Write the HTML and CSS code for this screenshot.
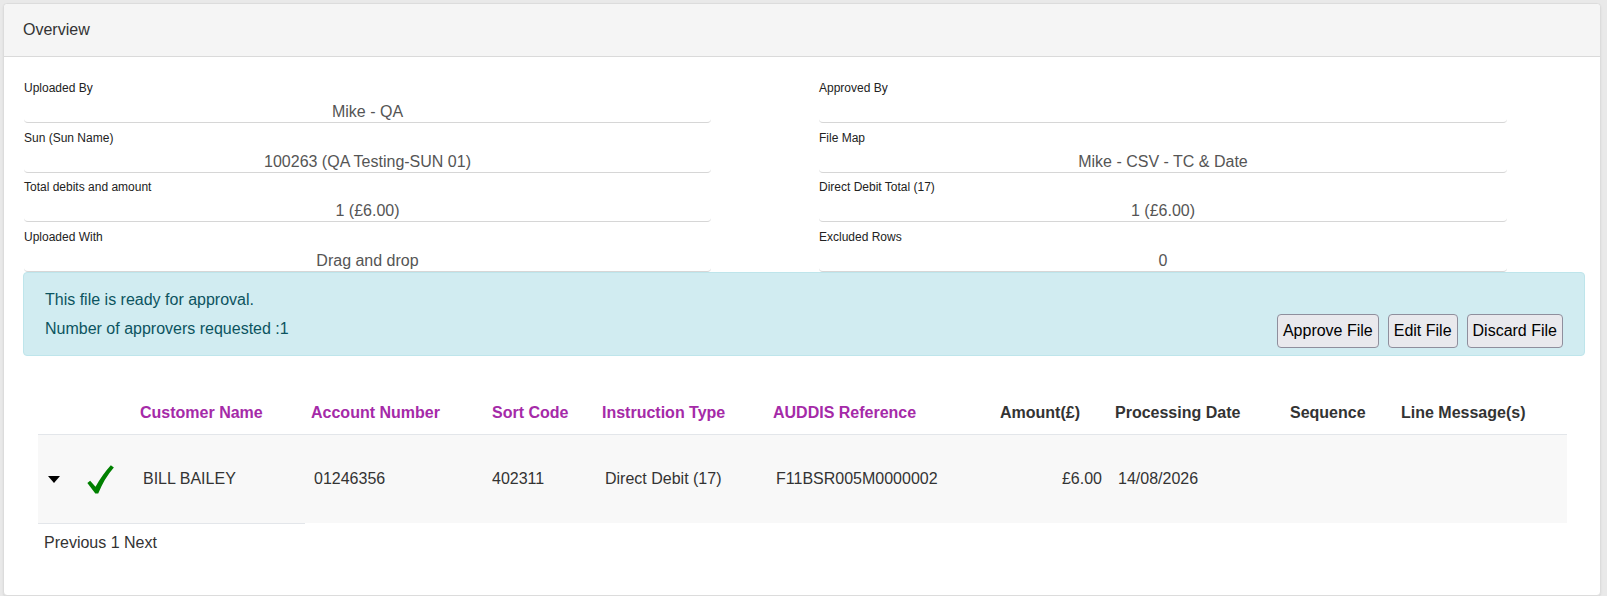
FILE: index.html
```html
<!DOCTYPE html>
<html lang="en">
<head>
    <meta charset="UTF-8">
    <meta name="viewport" content="width=device-width, initial-scale=1.0">
    <title>Submission Overview</title>
    <link rel="stylesheet" href="styles.css">
</head>
<body>
    <div class="panel">
        <div class="panel-heading">Overview</div>
        <div class="panel-body">
            <div class="summary">
                <div class="field">
                    <label>Uploaded By</label>
                    <div class="field-value">Mike - QA</div>
                </div>
                <div class="field">
                    <label>Approved By</label>
                    <div class="field-value"></div>
                </div>
                <div class="field">
                    <label>Sun (Sun Name)</label>
                    <div class="field-value">100263 (QA Testing-SUN 01)</div>
                </div>
                <div class="field">
                    <label>File Map</label>
                    <div class="field-value">Mike - CSV - TC &amp; Date</div>
                </div>
                <div class="field">
                    <label>Total debits and amount</label>
                    <div class="field-value">1 (£6.00)</div>
                </div>
                <div class="field">
                    <label>Direct Debit Total (17)</label>
                    <div class="field-value">1 (£6.00)</div>
                </div>
                <div class="field">
                    <label>Uploaded With</label>
                    <div class="field-value">Drag and drop</div>
                </div>
                <div class="field">
                    <label>Excluded Rows</label>
                    <div class="field-value">0</div>
                </div>
            </div>

            <div class="alert">
                <div class="alert-text">
                    <p>This file is ready for approval.</p>
                    <p>Number of approvers requested :1</p>
                </div>
                <div class="alert-actions">
                    <button>Approve File</button>
                    <button>Edit File</button>
                    <button>Discard File</button>
                </div>
            </div>

            <table class="rows">
                <colgroup>
                    <col style="width:40px">
                    <col style="width:57px">
                    <col style="width:171px">
                    <col style="width:181px">
                    <col style="width:110px">
                    <col style="width:171px">
                    <col style="width:227px">
                    <col style="width:115px">
                    <col style="width:175px">
                    <col style="width:111px">
                    <col style="width:171px">
                </colgroup>
                <thead>
                    <tr>
                        <th></th>
                        <th></th>
                        <th class="sortable">Customer Name</th>
                        <th class="sortable">Account Number</th>
                        <th class="sortable">Sort Code</th>
                        <th class="sortable">Instruction Type</th>
                        <th class="sortable">AUDDIS Reference</th>
                        <th>Amount(£)</th>
                        <th>Processing Date</th>
                        <th>Sequence</th>
                        <th>Line Message(s)</th>
                    </tr>
                </thead>
                <tbody>
                    <tr>
                        <td class="expand"><span class="caret"></span></td>
                        <td class="status">
                            <svg width="27" height="29" viewBox="0 0 26 28">
                                <path d="M0.3 17.3 L3 15.2 L8.2 21 Q15 9 23 0.3 L25.9 2.3 Q16.5 13 10.8 27.6 L8 27.6 Z" fill="#008000"/>
                            </svg>
                        </td>
                        <td>BILL BAILEY</td>
                        <td>01246356</td>
                        <td class="tight">402311</td>
                        <td>Direct Debit (17)</td>
                        <td>F11BSR005M0000002</td>
                        <td class="num">£6.00</td>
                        <td>14/08/2026</td>
                        <td></td>
                        <td></td>
                    </tr>
                </tbody>
            </table>
            <div class="pager">Previous 1 Next</div>
        </div>
    </div>
</body>
</html>
```

FILE: styles.css
```css
* {
    box-sizing: border-box;
}

body {
    margin: 0;
    background-color: #e9e9e9;
    font-family: "Liberation Sans", Arial, sans-serif;
    font-size: 16px;
    color: #333;
}

.panel {
    width: 1598px;
    margin: 3px 6px 5px 3px;
    background: white;
    border: 1px solid #dcdcdc;
    border-radius: 4px;
    box-shadow: 0 1px 2px rgba(0, 0, 0, 0.08);
}

.panel-heading {
    height: 53px;
    line-height: 52px;
    padding: 0 19px;
    background-color: #f5f5f5;
    border-bottom: 1px solid #dadada;
    border-radius: 4px 4px 0 0;
}

.panel-body {
    padding: 24px 15px 42px 19px;
}

.summary {
    display: grid;
    grid-template-columns: 687px 688px;
    column-gap: 108px;
    padding-left: 1px;
}

.field {
    margin-bottom: 7.5px;
}

.field:nth-last-child(-n+2) {
    margin-bottom: 0;
}

.field label {
    display: block;
    font-size: 12px;
    line-height: 14px;
    color: #222;
}

.field-value {
    height: 28px;
    padding-top: 7px;
    line-height: 20px;
    text-align: center;
    color: #555;
    border-bottom: 1px solid #d6d6d6;
    border-radius: 4px;
}

.alert {
    display: flex;
    justify-content: space-between;
    padding: 17px 21px 7px 21px;
    background-color: #d1ecf1;
    border: 1px solid #bee5eb;
    border-radius: 4px;
    color: #0c5460;
}

.alert-text {
    align-self: flex-start;
}

.alert-text p {
    margin: 0 0 9px;
    line-height: 20px;
}

.alert-actions {
    display: flex;
    gap: 9px;
    align-self: flex-end;
    margin-top: 6px;
}

.alert-actions button {
    padding: 7px 5px;
    font-family: "Liberation Sans", Arial, sans-serif;
    font-size: 16px;
    line-height: 18px;
    color: #000;
    background-color: #e9e9ed;
    border: 1px solid #8f8f9d;
    border-radius: 4px;
    cursor: pointer;
}

.rows {
    width: 1529px;
    margin: 39px 0 0 15px;
    border-collapse: collapse;
    table-layout: fixed;
}

.rows th {
    padding: 8px 5px 11px;
    line-height: 20px;
    text-align: left;
    font-weight: bold;
    color: #333;
    white-space: nowrap;
    border-bottom: 1px solid #e3e6ea;
}

.rows th.sortable {
    color: #a52aa8;
}

.rows td {
    padding: 34px 8px;
    line-height: 20px;
    background-color: #f8f8f8;
    white-space: nowrap;
}

.rows td.tight {
    padding-left: 5px;
}

.rows .num {
    text-align: right;
}

.rows td.expand {
    padding-left: 10px;
}

.rows td.status {
    padding: 0 0 0 9px;
    vertical-align: middle;
}

.status svg {
    display: block;
    margin-top: 2px;
}

.caret {
    display: inline-block;
    width: 0;
    height: 0;
    border-left: 6px solid transparent;
    border-right: 6px solid transparent;
    border-top: 7px solid #000;
    vertical-align: middle;
}

.pager {
    width: 267px;
    margin-left: 15px;
    padding: 9px 0 0 6px;
    line-height: 20px;
    border-top: 1px solid #e3e6ea;
}
```
